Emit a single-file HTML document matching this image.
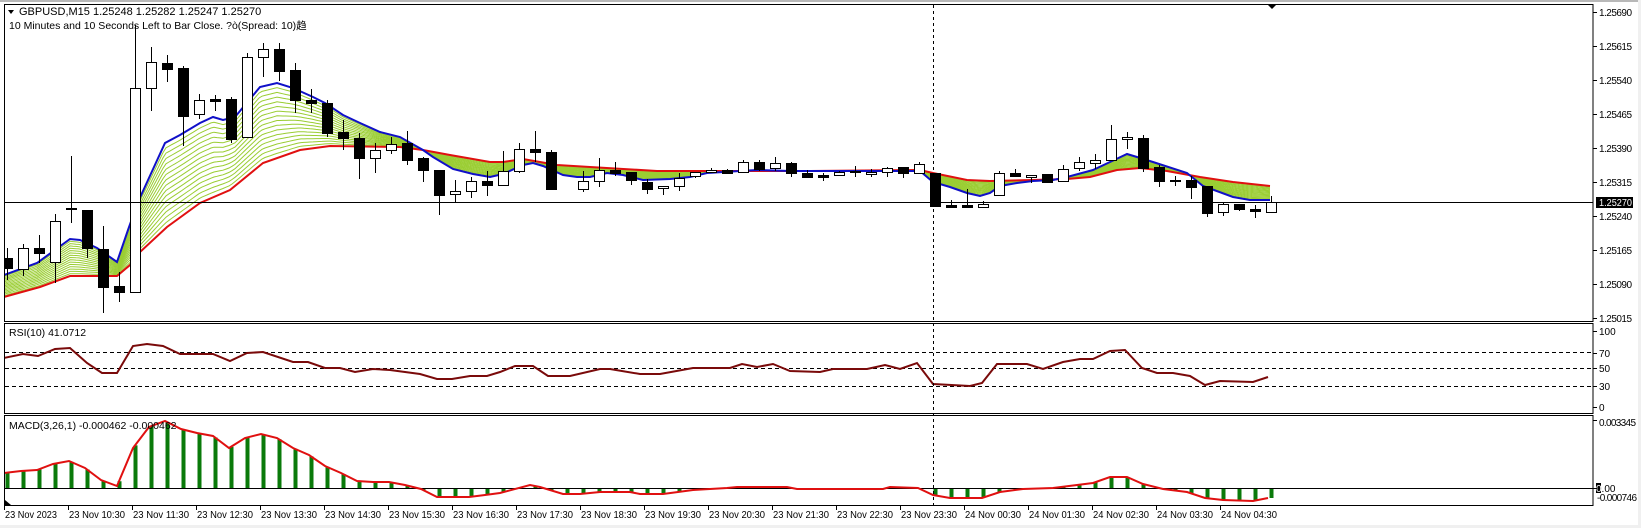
<!DOCTYPE html>
<html><head><meta charset="utf-8">
<style>
html,body{margin:0;padding:0;background:#fff;}
svg{display:block;font-family:"Liberation Sans","Noto Sans CJK SC",sans-serif;}
</style></head>
<body>
<svg id="s" width="1641" height="528" viewBox="0 0 1641 528" xmlns="http://www.w3.org/2000/svg">
<rect x="0" y="0" width="1641" height="528" fill="#fff"/>
<rect x="0" y="0" width="1641" height="2" fill="#b8b8b8"/>
<rect x="1638" y="0" width="3" height="528" fill="#f0f0f0"/>
<rect x="0" y="525" width="1641" height="3" fill="#f0f0f0"/>
<defs><clipPath id="cm"><rect x="5" y="5" width="1588" height="316"/></clipPath>
<clipPath id="cr"><rect x="5" y="324" width="1588" height="89"/></clipPath>
<clipPath id="cd"><rect x="5" y="416" width="1588" height="89"/></clipPath></defs>
<g id="fan" clip-path="url(#cm)"></g>
<g id="ma" clip-path="url(#cm)"></g>
<g id="cand" clip-path="url(#cm)"></g>
<line x1="5" y1="202.5" x2="1593" y2="202.5" stroke="#000" stroke-width="1"/>
<g stroke="#000" stroke-dasharray="4,3" stroke-width="1">
<line x1="5" y1="352.5" x2="1593" y2="352.5"/>
<line x1="5" y1="368.5" x2="1593" y2="368.5"/>
<line x1="5" y1="386.5" x2="1593" y2="386.5"/>
</g>
<g id="rsi" clip-path="url(#cr)"></g>
<g id="macd" clip-path="url(#cd)"></g>
<line x1="5" y1="488.5" x2="1593" y2="488.5" stroke="#000" stroke-width="1"/>
<g id="macdl" clip-path="url(#cd)"></g>
<line x1="933.5" y1="5" x2="933.5" y2="505" stroke="#000" stroke-dasharray="3,3" stroke-width="1"/>
<g fill="none" stroke="#000" stroke-width="1">
<rect x="4.5" y="4.5" width="1588.5" height="317"/>
<rect x="4.5" y="323.5" width="1588.5" height="90"/>
<rect x="4.5" y="415.5" width="1588.5" height="90"/>
</g>
<polygon points="1268,5 1276,5 1272,9" fill="#000"/>
<polygon points="5,500 5,505 11,505" fill="#000"/>
<polygon points="8,10 14,10 11,14" fill="#000"/>
<text x="19" y="15" font-size="11" fill="#000">GBPUSD,M15  1.25248 1.25282 1.25247 1.25270</text>
<text x="9" y="29" font-size="10.5" fill="#000">10 Minutes and 10 Seconds Left to Bar Close. ?ò(Spread: 10)趋</text>
<text x="9" y="336" font-size="10.5" fill="#000">RSI(10) 41.0712</text>
<text x="9" y="429" font-size="10.5" fill="#000">MACD(3,26,1) -0.000462 -0.000462</text>
<g font-size="10" fill="#000" id="axis" lengthAdjust="spacingAndGlyphs">
<text x="1599" y="16" textLength="33">1.25690</text>
<text x="1599" y="50" textLength="33">1.25615</text>
<text x="1599" y="84" textLength="33">1.25540</text>
<text x="1599" y="118" textLength="33">1.25465</text>
<text x="1599" y="152" textLength="33">1.25390</text>
<text x="1599" y="186" textLength="33">1.25315</text>
<text x="1599" y="220" textLength="33">1.25240</text>
<text x="1599" y="254" textLength="33">1.25165</text>
<text x="1599" y="288" textLength="33">1.25090</text>
<text x="1599" y="322" textLength="33">1.25015</text>
<text x="1599" y="335">100</text>
<text x="1599" y="357">70</text>
<text x="1599" y="372">50</text>
<text x="1599" y="390">30</text>
<text x="1599" y="411">0</text>
<text x="1599" y="426" textLength="37">0.003345</text>
<text x="1597" y="501" textLength="40">-0.000746</text>
</g>
<rect x="1596" y="197" width="37" height="11" fill="#000"/>
<text x="1599" y="206" font-size="10" fill="#fff" textLength="33" lengthAdjust="spacingAndGlyphs">1.25270</text>
<rect x="1596" y="483" width="5" height="10" fill="#000"/>
<text x="1596" y="492" font-size="10" fill="#000">0.00</text>
<text x="1596" y="492" font-size="10" fill="#fff">0</text>
<g id="ticks" stroke="#000"></g>
<g id="time" font-size="10.5" fill="#000">
<text x="5" y="518" textLength="52" lengthAdjust="spacingAndGlyphs">23 Nov 2023</text>
<text x="69" y="518" textLength="56" lengthAdjust="spacingAndGlyphs">23 Nov 10:30</text>
<text x="133" y="518" textLength="56" lengthAdjust="spacingAndGlyphs">23 Nov 11:30</text>
<text x="197" y="518" textLength="56" lengthAdjust="spacingAndGlyphs">23 Nov 12:30</text>
<text x="261" y="518" textLength="56" lengthAdjust="spacingAndGlyphs">23 Nov 13:30</text>
<text x="325" y="518" textLength="56" lengthAdjust="spacingAndGlyphs">23 Nov 14:30</text>
<text x="389" y="518" textLength="56" lengthAdjust="spacingAndGlyphs">23 Nov 15:30</text>
<text x="453" y="518" textLength="56" lengthAdjust="spacingAndGlyphs">23 Nov 16:30</text>
<text x="517" y="518" textLength="56" lengthAdjust="spacingAndGlyphs">23 Nov 17:30</text>
<text x="581" y="518" textLength="56" lengthAdjust="spacingAndGlyphs">23 Nov 18:30</text>
<text x="645" y="518" textLength="56" lengthAdjust="spacingAndGlyphs">23 Nov 19:30</text>
<text x="709" y="518" textLength="56" lengthAdjust="spacingAndGlyphs">23 Nov 20:30</text>
<text x="773" y="518" textLength="56" lengthAdjust="spacingAndGlyphs">23 Nov 21:30</text>
<text x="837" y="518" textLength="56" lengthAdjust="spacingAndGlyphs">23 Nov 22:30</text>
<text x="901" y="518" textLength="56" lengthAdjust="spacingAndGlyphs">23 Nov 23:30</text>
<text x="965" y="518" textLength="56" lengthAdjust="spacingAndGlyphs">24 Nov 00:30</text>
<text x="1029" y="518" textLength="56" lengthAdjust="spacingAndGlyphs">24 Nov 01:30</text>
<text x="1093" y="518" textLength="56" lengthAdjust="spacingAndGlyphs">24 Nov 02:30</text>
<text x="1157" y="518" textLength="56" lengthAdjust="spacingAndGlyphs">24 Nov 03:30</text>
<text x="1221" y="518" textLength="56" lengthAdjust="spacingAndGlyphs">24 Nov 04:30</text>
</g>
</svg>
<script>
var NS="http://www.w3.org/2000/svg";
function el(p,t,a){var e=document.createElementNS(NS,t);for(var k in a)e.setAttribute(k,a[k]);document.getElementById(p).appendChild(e);return e;}
function pts(a){return a.map(function(p){return p[0]+","+p[1]}).join(" ");}
function interp(a,x){if(x<=a[0][0])return a[0][1];for(var i=1;i<a.length;i++){if(x<=a[i][0]){var t=(x-a[i-1][0])/(a[i][0]-a[i-1][0]);return a[i-1][1]+t*(a[i][1]-a[i-1][1]);}}return a[a.length-1][1];}
var blue=[[4,275],[37,263],[70,239],[80,240],[97,248],[117,262],[128,230],[138,202],[165,143],[180,135],[200,123],[213,117],[223,120],[235,117],[260,87],[277,83],[293,88],[313,97],[325,103],[343,115],[360,123],[380,132],[400,137],[423,150],[433,157],[453,169],[473,174],[490,177],[503,174],[523,165],[533,163],[543,166],[563,175],[577,177],[590,177],[607,173],[623,175],[643,180],[670,179],[690,177],[707,173],[757,170],[790,171],[810,171],[920,171],[933,182],[950,187],[967,193],[980,196],[990,193],[1000,186],[1017,183],[1033,181],[1053,180],[1067,177],[1093,170],[1110,162],[1127,154],[1137,157],[1153,162],[1187,173],[1203,186],[1233,197],[1250,200],[1270,200]];
var red=[[4,297],[40,287],[70,276],[117,276],[130,265],[140,252],[167,227],[200,203],[230,190],[263,163],[300,150],[330,146],[400,147],[423,150],[450,155],[490,162],[503,162],[523,159],[557,165],[590,167],[657,171],[723,171],[810,171],[920,170],[933,173],[967,180],[990,181],[1033,180],[1067,179],[1090,177],[1117,170],[1140,168],[1167,171],[1200,177],[1233,182],[1270,186]];
var xs=[];for(var x=4;x<=1270;x+=3)xs.push(x);xs.push(1270);
var N=16;
for(var k=1;k<N;k++){var w=k/N;var a=xs.map(function(x){var b=interp(blue,x),r=interp(red,x);return [x,(b+(r-b)*w).toFixed(1)];});
el("fan","polyline",{points:pts(a),fill:"none",stroke:"#9acd32","stroke-width":"1"});}
el("ma","polyline",{points:pts(red),fill:"none",stroke:"#e01010","stroke-width":"2"});
el("ma","polyline",{points:pts(blue),fill:"none",stroke:"#1010c8","stroke-width":"2"});
var C=[[0,258,268,248,280,0],[1,248,269,244,276,1],[2,248,253,235,263,0],[3,221,262,214,283,1],[4,208,209,156,223,0],[5,210,248,210,258,0],[6,249,287,226,313,0],[7,286,292,272,302,0],[8,88,292,25,292,1],[9,62,88,47,111,1],[10,63,69,55,82,0],[11,68,116,66,146,0],[12,100,114,94,119,1],[13,99,101,95,111,0],[14,99,139,97,143,0],[15,57,137,53,137,1],[16,49,57,43,77,1],[17,49,71,43,81,0],[18,70,100,63,113,0],[19,100,103,89,113,0],[20,103,133,100,137,0],[21,132,138,120,150,0],[22,138,158,133,179,0],[23,150,158,143,173,1],[24,144,150,137,154,1],[25,143,160,131,165,0],[26,158,170,157,182,0],[27,170,195,170,215,0],[28,191,194,180,202,1],[29,181,191,177,198,1],[30,181,185,171,196,0],[31,171,185,151,185,1],[32,149,171,143,173,1],[33,149,152,131,162,0],[34,152,189,150,189,0],[36,181,189,171,192,1],[37,170,181,158,187,1],[38,170,173,162,176,0],[39,172,180,172,185,0],[40,182,189,179,194,0],[41,186,188,186,195,1],[42,178,186,173,191,1],[43,172,176,172,178,1],[44,170,172,168,173,1],[45,170,173,169,173,0],[46,162,172,160,173,1],[47,162,169,160,171,0],[48,163,168,157,171,1],[49,163,173,162,177,0],[50,173,177,170,177,0],[51,175,177,173,181,0],[52,172,175,171,175,1],[53,171,172,166,177,0],[54,172,174,169,177,1],[55,168,172,167,177,1],[56,167,173,167,178,0],[57,164,173,162,173,1],[58,173,206,173,206,0],[59,205,207,200,207,0],[60,205,207,189,207,0],[61,204,207,201,208,1],[62,173,195,171,195,1],[63,173,176,169,176,0],[64,175,177,175,183,1],[65,174,182,174,182,0],[66,169,181,165,181,1],[67,162,168,157,171,1],[68,160,163,154,169,1],[69,139,160,125,160,1],[70,137,139,132,149,1],[71,138,168,135,172,0],[72,167,181,165,187,0],[73,180,181,176,186,0],[74,180,187,176,199,0],[75,186,213,186,217,0],[76,204,212,202,216,1],[77,204,209,204,211,0],[78,209,211,205,218,0],[79,202,212,196,212,1]];
C.forEach(function(c){var cx=7+16*c[0];
el("cand","line",{x1:cx+0.5,y1:c[3],x2:cx+0.5,y2:c[4],stroke:"#000","stroke-width":"1"});
var h=Math.max(c[2]-c[1],1);
if(c[5])el("cand","rect",{x:cx-4.5,y:c[1]+0.5,width:10,height:h,fill:"#fff",stroke:"#000","stroke-width":"1"});
else el("cand","rect",{x:cx-5,y:c[1],width:11,height:h+1,fill:"#000"});});
var R=[[4,358],[23,354],[38,356],[55,349],[70,348],[87,363],[102,373],[117,373],[133,346],[147,344],[163,346],[180,354],[197,354],[213,354],[230,361],[247,353],[263,352],[293,362],[308,362],[325,368],[340,368],[355,372],[373,369],[390,370],[420,374],[437,379],[452,379],[470,376],[487,376],[500,372],[515,366],[533,366],[548,376],[570,376],[600,369],[610,369],[640,374],[660,374],[693,368],[730,368],[742,364],[757,367],[773,364],[790,371],[820,372],[833,369],[867,369],[885,365],[900,369],[917,363],[933,384],[970,386],[982,383],[997,364],[1027,364],[1043,369],[1063,362],[1080,359],[1093,359],[1110,351],[1125,350],[1142,368],[1157,373],[1173,373],[1190,376],[1205,385],[1220,381],[1253,382],[1268,377]];
el("rsi","polyline",{points:pts(R),fill:"none",stroke:"#7a0a0a","stroke-width":"2"});
var M=[[4,473],[21,471],[37,470],[53,464],[69,461],[85,468],[101,480],[117,486],[133,448],[149,427],[165,421],[181,429],[197,433],[213,436],[229,448],[245,438],[261,434],[277,438],[293,448],[309,455],[325,466],[341,473],[357,481],[373,482],[389,482],[405,485],[421,489],[437,497],[453,497],[469,497],[485,495],[500,493],[530,485],[540,487],[563,494],[580,494],[600,492],[630,492],[640,494],[663,494],[693,490],[727,488],[737,487],[787,487],[797,489],[883,489],[890,487],[918,488],[933,495],[950,498],[982,498],[1000,492],[1023,489],[1053,488],[1093,483],[1110,477],[1127,477],[1143,484],[1163,489],[1187,492],[1205,498],[1223,500],[1253,501],[1268,498]];
for(var i=0;i<80;i++){var cx=7+16*i;var v=interp(M,cx);var t=Math.min(v,488),b=Math.max(v,488);
if(b-t>=1)el("macd","rect",{x:cx-1.5,y:t,width:4,height:b-t,fill:"#0a7a0a"});}
el("macdl","polyline",{points:pts(M),fill:"none",stroke:"#e01010","stroke-width":"2"});
[12,46,80,114,148,182,216,250,284,318,331,353,368,386,407,420,488].forEach(function(y){el("ticks","line",{x1:1593,y1:y+0.5,x2:1597,y2:y+0.5});});
for(var k=0;k<20;k++){var x=(k==0?4:68+64*(k-1))+0.5;el("ticks","line",{x1:x,y1:506,x2:x,y2:510});}
</script>
</body></html>
